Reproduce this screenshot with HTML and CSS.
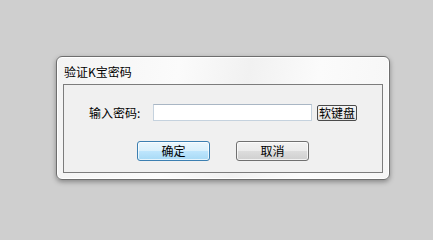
FILE: index.html
```html
<!DOCTYPE html>
<html lang="zh-CN">
<head>
<meta charset="utf-8">
<title>验证K宝密码</title>
<link rel="stylesheet" href="styles.css">
</head>
<body>
<div class="dialog">
  <div class="title">验证K宝密码</div>
  <div class="panel">
    <div class="row">
      <span class="label">输入密码:</span>
      <input class="pwd" type="password">
      <button class="softkb">软键盘</button>
    </div>
    <div class="actions">
      <button class="btn btn-primary">确定</button>
      <button class="btn">取消</button>
    </div>
  </div>
</div>
</body>
</html>
```

FILE: styles.css
```css
html, body {
  margin: 0;
  padding: 0;
}
body {
  width: 433px;
  height: 235px;
  background: #cfcfcf;
  font-family: "Noto Sans CJK SC", "Liberation Sans", sans-serif;
  font-size: 12px;
  color: #000;
  overflow: hidden;
  padding-top: 56px;
  padding-left: 56px;
  box-sizing: border-box;
}
.dialog {
  width: 334px;
  height: 124px;
  box-sizing: border-box;
  border: 1px solid #6e6e6e;
  border-radius: 6px;
  background: linear-gradient(100deg, #f3f3f3 0%, #fbfbfb 35%, #f1f1f1 55%, #fbfbfb 75%, #f6f6f6 100%);
  box-shadow: 0 2px 5px rgba(0, 0, 0, 0.35), inset 0 0 0 1px #ffffff;
  padding: 0 6px 6px 6px;
  display: flex;
  flex-direction: column;
}
.title {
  height: 27px;
  line-height: 14px;
  padding: 8px 0 0 1px;
  box-sizing: border-box;
  font-size: 12px;
  color: #000;
}
.panel {
  flex: 1;
  border: 1px solid #7c7c7c;
  background: #f0f0f0;
  padding: 19px 0 0 25px;
  display: flex;
  flex-direction: column;
}
.row {
  display: flex;
  align-items: center;
  height: 17px;
}
.label {
  width: 64px;
  line-height: 14px;
  font-size: 12px;
  color: #000;
}
.pwd {
  width: 159px;
  height: 17px;
  box-sizing: border-box;
  margin: 0;
  padding: 0;
  border: 1px solid #c5d2de;
  border-top-color: #a9b6c4;
  background: #fff;
  outline: none;
}
.softkb {
  margin: 0 0 0 5px;
  width: 40px;
  height: 16px;
  padding: 0;
  box-sizing: border-box;
  border: 1px solid #4a4a4a;
  border-radius: 2px;
  background: linear-gradient(#f4f4f4, #e3e3e3);
  font-family: "Noto Sans CJK SC", sans-serif;
  font-size: 12px;
  font-weight: 400;
  line-height: 13px;
  color: #000;
}
.actions {
  display: flex;
  margin-top: 20px;
  padding-left: 48px;
  gap: 26px;
}
.btn {
  width: 73px;
  height: 20px;
  margin: 0;
  padding: 0;
  box-sizing: border-box;
  border: 1px solid #707070;
  border-radius: 3px;
  background: linear-gradient(#f2f2f2 0%, #ebebeb 49%, #dddddd 50%, #cfcfcf 100%);
  box-shadow: inset 0 0 0 1px rgba(255, 255, 255, 0.7);
  font-family: "Noto Sans CJK SC", sans-serif;
  font-size: 12px;
  line-height: 16px;
  color: #000;
}
.btn-primary {
  border-color: #3c7fb1;
  background: linear-gradient(#eaf6fd 0%, #d9f0fc 49%, #bee6fd 50%, #a7d9f5 100%);
}
```
